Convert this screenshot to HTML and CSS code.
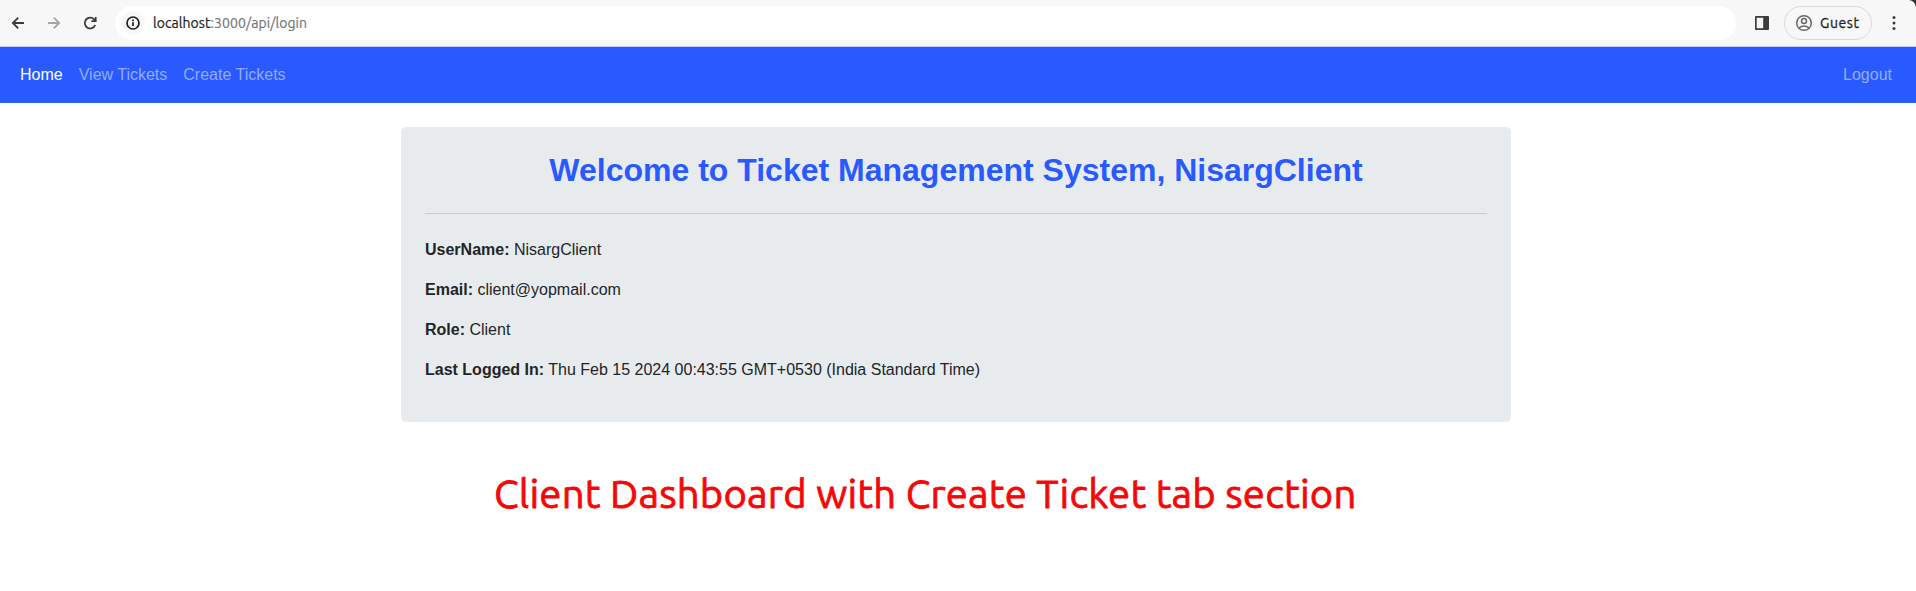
FILE: index.html
```
<!DOCTYPE html>
<html lang="en">
<head>
<meta charset="utf-8">
<title>Ticket Management System</title>
<link rel="stylesheet" href="styles.css">
</head>
<body>
<div class="toolbar">
  <div class="controls">
    <svg class="icon" viewBox="0 0 18 18"><path d="M15 9H4M9.2 3.6 3.8 9l5.4 5.4"/></svg>
    <svg class="icon icon-disabled" viewBox="0 0 18 18"><path d="M3 9h11M8.8 3.6 14.2 9l-5.4 5.4"/></svg>
    <svg class="icon" viewBox="0 0 18 18"><path d="M14.2 11A5.4 5.4 0 1 1 13.2 5.4L14.6 7M14.7 3v4.2h-4.3"/></svg>
  </div>
  <div class="address">
    <svg class="info" viewBox="0 0 24 24"><circle class="info-bg" cx="12" cy="12" r="12"/><circle class="ring" cx="12" cy="12" r="6"/><path class="ring" d="M12 11.3v3.8M12 8.6v1.6"/></svg>
    <div class="url"><span class="host">localhost</span><span class="path">:3000/api/login</span></div>
  </div>
  <svg class="panel" viewBox="0 0 14 14"><path fill-rule="evenodd" d="M1 0h12a1 1 0 0 1 1 1v12a1 1 0 0 1-1 1H1a1 1 0 0 1-1-1V1a1 1 0 0 1 1-1zM1.7 1.7v10.6h6.5V1.7z"/></svg>
  <div class="profile">
    <svg class="avatar" viewBox="0 0 18 18"><circle cx="9" cy="9" r="7.3"/><circle cx="9" cy="7" r="2.5"/><path d="M4 14c2.8-2.7 7.2-2.7 10 0"/></svg>
    <span>Guest</span>
  </div>
  <svg class="more" viewBox="0 0 4 16"><circle cx="2" cy="2.5" r="1.5"/><circle cx="2" cy="8" r="1.5"/><circle cx="2" cy="13.5" r="1.5"/></svg>
  <svg class="corner" viewBox="0 0 7 7"><path d="M0 0h7v7Q6 1 0 0z"/></svg>
</div>
<nav class="navbar">
  <a class="nav-link active">Home</a>
  <a class="nav-link">View Tickets</a>
  <a class="nav-link">Create Tickets</a>
  <a class="nav-link logout">Logout</a>
</nav>
<main class="container">
  <section class="card">
    <h1 class="welcome">Welcome to Ticket Management System, NisargClient</h1>
    <hr class="divider">
    <p class="field"><b>UserName:</b> NisargClient</p>
    <p class="field"><b>Email:</b> client@yopmail.com</p>
    <p class="field"><b>Role:</b> Client</p>
    <p class="field"><b>Last Logged In:</b> Thu Feb 15 2024 00:43:55 GMT+0530 (India Standard Time)</p>
  </section>
  <p class="caption">Client Dashboard with Create Ticket tab section</p>
</main>
</body>
</html>
```
FILE: styles.css
```
* { box-sizing: border-box; }
body {
  margin: 0;
  height: 591px;
  overflow: hidden;
  background: #fff;
  color: #212529;
  font: 16px/24px "Liberation Sans", Arial, sans-serif;
}
.toolbar {
  position: relative;
  display: flex;
  align-items: center;
  height: 47px;
  padding: 0 20px 0 9px;
  background: #f7f7f7;
  border-bottom: 1px solid #c5d0f5;
  font-family: Ubuntu, "Noto Sans", sans-serif;
}
.controls { display: flex; gap: 18px; width: 106px; }
.icon { width: 18px; height: 18px; fill: none; stroke: #3c3c3c; stroke-width: 1.8; }
.icon-disabled { stroke: #a5a5a5; }
.address {
  display: flex;
  align-items: center;
  width: 1621px;
  height: 34px;
  padding-left: 6px;
  border-radius: 17px;
  background: #fff;
}
.info { width: 24px; height: 24px; margin-right: 8px; }
.info-bg { fill: #f8f8f8; }
.ring { fill: none; stroke: #1f1f1f; stroke-width: 1.7; }
.url { font-size: 14px; letter-spacing: .07px; color: #74777a; white-space: nowrap; -webkit-text-stroke: .2px currentColor; }
.host { color: #202124; }
.panel { width: 14px; height: 14px; margin-left: 19px; fill: #3c3c3c; }
.profile {
  display: flex;
  align-items: center;
  gap: 7px;
  width: 88px;
  height: 34px;
  margin-left: 15px;
  padding-left: 10px;
  border: 1px solid #d9d9d9;
  border-radius: 17px;
  color: #1f1f1f;
  font-size: 14px;
  letter-spacing: .6px;
  -webkit-text-stroke: .3px currentColor;
}
.avatar { width: 18px; height: 18px; fill: none; stroke: #6a6a6a; stroke-width: 1.5; }
.more { width: 4px; height: 16px; margin-left: 20px; fill: #3c3c3c; }
.corner { position: absolute; top: 0; right: 0; width: 7px; height: 7px; fill: #333; }
.navbar {
  display: flex;
  align-items: center;
  gap: 16px;
  height: 56px;
  padding: 0 24px 0 20px;
  background: #285aff;
}
.nav-link { color: #93acff; }
.active { color: #fff; }
.logout { margin-left: auto; }
.container { width: 1110px; margin: 24px 0 0 401px; }
.card {
  height: 295px;
  padding: 24px;
  border-radius: 5px;
  background: #e8ebed;
}
.welcome {
  margin: 0;
  color: #285aff;
  font-size: 32px;
  line-height: 38px;
  text-align: center;
}
.divider { margin: 24px 0; border: 0; border-top: 1px solid #cacdd0; }
.field { margin: 0 0 16px; }
.caption {
  margin: 44px 0 0 93px;
  color: #f60707;
  font: 40px/56px Ubuntu, "Noto Sans", sans-serif;
  letter-spacing: .21px;
  white-space: nowrap;
  -webkit-text-stroke: .8px currentColor;
}
```
